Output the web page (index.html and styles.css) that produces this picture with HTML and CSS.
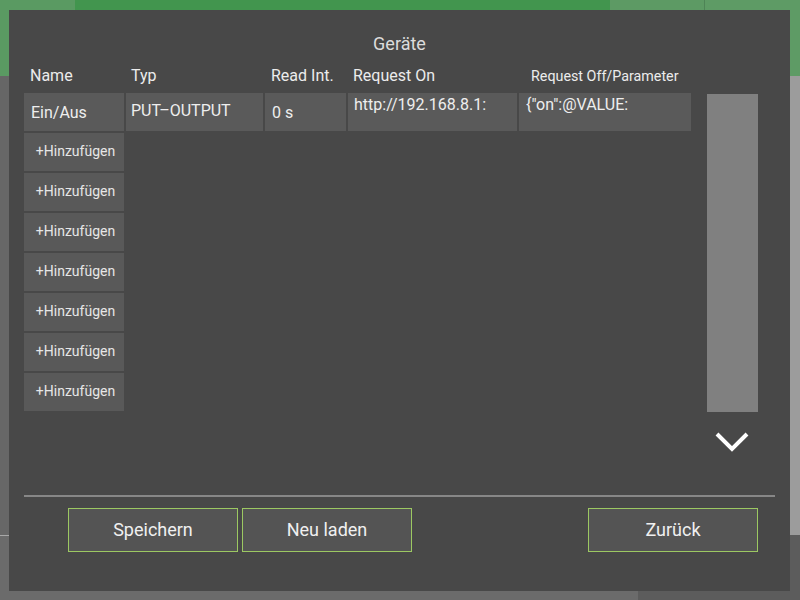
FILE: index.html
```html
<!DOCTYPE html>
<html>
<head>
<title>Geräte</title>
<link rel="stylesheet" href="styles.css">
</head>
<body>
<div class="backdrop">
	<div class="app_header">
		<div class="tab tab_home"></div>
		<div class="tab tab_active"></div>
		<div class="tab tab_side"></div>
		<div class="tab tab_last"></div>
	</div>
	<div class="app_main">
		<div class="app_content"></div>
		<div class="app_sidebar"></div>
	</div>
	<div class="app_footer">
		<div class="footer_left"></div>
		<div class="footer_right"></div>
	</div>
</div>

<div class="dialog">
	<div class="dlg_title">Geräte</div>
	<div class="grid_head">
		<div class="col_name">Name</div>
		<div class="col_typ">Typ</div>
		<div class="col_read">Read Int.</div>
		<div class="col_on">Request On</div>
		<div class="col_off small_head">Request Off/Parameter</div>
	</div>
	<div class="grid_area">
		<div class="device_grid">
			<div class="cell cell_mid">Ein/Aus</div>
			<div class="cell cell_mid cell_typ">PUT–OUTPUT</div>
			<div class="cell cell_mid">0 s</div>
			<div class="cell cell_top">http://192.168.8.1:</div>
			<div class="cell cell_top cell_param">{"on":@VALUE:</div>
			<button class="add_btn">+Hinzufügen</button>
			<button class="add_btn">+Hinzufügen</button>
			<button class="add_btn">+Hinzufügen</button>
			<button class="add_btn">+Hinzufügen</button>
			<button class="add_btn">+Hinzufügen</button>
			<button class="add_btn">+Hinzufügen</button>
			<button class="add_btn">+Hinzufügen</button>
		</div>
		<div class="scroll_track"></div>
	</div>
	<div class="scroll_row">
		<svg class="chevron" width="34" height="22" viewBox="0 0 34 22">
			<polyline points="2,3 17,18 32,3" fill="none" stroke="#ffffff" stroke-width="4"/>
		</svg>
	</div>
	<hr class="dlg_line">
	<div class="btn_row">
		<button class="dlg_btn">Speichern</button>
		<button class="dlg_btn">Neu laden</button>
		<div class="btn_spacer"></div>
		<button class="dlg_btn">Zurück</button>
	</div>
</div>
</body>
</html>
```

FILE: styles.css
```css
body
{
	margin : 0;
	font-family : Roboto, "Liberation Sans", sans-serif;
	background-color : #676767;
	width : 800px;
	height : 600px;
	overflow : hidden;
}
.backdrop
{
	display : flex;
	flex-direction : column;
	height : 600px;
}
.app_header
{
	display : flex;
	height : 76px;
}
.tab
{
	height : 100%;
}
.tab_home
{
	width : 75px;
	background-color : #5a9a62;
}
.tab_active
{
	width : 535px;
	background-color : #42954e;
}
.tab_side
{
	width : 94px;
	background-color : #5d9a64;
	border-right : 1px solid #4e8456;
}
.tab_last
{
	flex : 1;
	background-color : #5e9b65;
}
.app_main
{
	display : flex;
	flex : 1;
}
.app_content
{
	flex : 1;
	background-color : #676767;
	border-top : 54px solid #666666;
}
.app_sidebar
{
	width : 40px;
	background-color : #9c9c9c;
}
.app_footer
{
	display : flex;
	height : 65px;
}
.footer_left
{
	flex : 1;
	background-color : #6b6b6b;
	border-top : 1px solid #a8a8a8;
}
.footer_right
{
	width : 162px;
	background-color : #5c5c5c;
}

/* dialog over the app */
.dialog
{
	position : absolute;
	left : 9px;
	top : 10px;
	width : 781px;
	height : 581px;
	box-sizing : border-box;
	padding : 22px 15px 0 15px;
	background-color : #484848;
	display : flex;
	flex-direction : column;
	color : #e8e8e8;
}
.dlg_title
{
	height : 24px;
	line-height : 24px;
	font-size : 18px;
	text-align : center;
	color : #dcdcdc;
}
.grid_head
{
	display : grid;
	grid-template-columns : 100px 137px 81px 169px 172px;
	column-gap : 2px;
	height : 37px;
	padding-top : 2px;
	box-sizing : border-box;
	align-items : center;
	font-size : 16px;
	color : #ececec;
}
.col_name
{
	padding-left : 6px;
}
.col_typ
{
	padding-left : 5px;
}
.col_read
{
	padding-left : 6px;
}
.col_on
{
	padding-left : 5px;
}
.col_off
{
	padding-left : 12px;
	white-space : nowrap;
}
.small_head
{
	font-size : 14.3px;
}
.grid_area
{
	display : flex;
	gap : 16px;
	height : 319px;
}
.device_grid
{
	display : grid;
	grid-template-columns : 100px 137px 81px 169px 172px;
	grid-auto-rows : 38px;
	gap : 2px;
	align-content : start;
}
.cell
{
	background-color : #5a5a5a;
	font-size : 16px;
	color : #eeeeee;
	padding-left : 7px;
	overflow : hidden;
	white-space : nowrap;
}
.cell_mid
{
	display : flex;
	align-items : center;
}
.cell_typ
{
	padding-left : 5px;
	padding-bottom : 4px;
}
.cell_top
{
	padding-top : 2px;
	padding-left : 6px;
}
.cell_param
{
	padding-left : 7px;
}
.add_btn
{
	grid-column : 1;
	background-color : #595959;
	border : none;
	padding : 0 0 2px 3px;
	font-family : Roboto, "Liberation Sans", sans-serif;
	font-size : 14px;
	color : #e6e6e6;
	text-align : center;
}
.scroll_track
{
	width : 51px;
	margin-top : 1px;
	background-color : #808080;
}
.scroll_row
{
	height : 60px;
	display : flex;
	align-items : center;
	justify-content : flex-end;
	padding-right : 26px;
}
.chevron
{
	display : block;
}
.dlg_line
{
	margin : 23px 0 0 0;
	height : 2px;
	border : none;
	background-color : #878787;
}
.btn_row
{
	display : flex;
	gap : 4px;
	margin-top : 11px;
	padding-left : 44px;
	padding-right : 17px;
}
.btn_spacer
{
	flex : 1;
}
.dlg_btn
{
	width : 170px;
	height : 44px;
	padding-bottom : 3px;
	background-color : #545454;
	border : 1px solid #9cc862;
	font-family : Roboto, "Liberation Sans", sans-serif;
	font-size : 18px;
	color : #f0f0f0;
}
```
